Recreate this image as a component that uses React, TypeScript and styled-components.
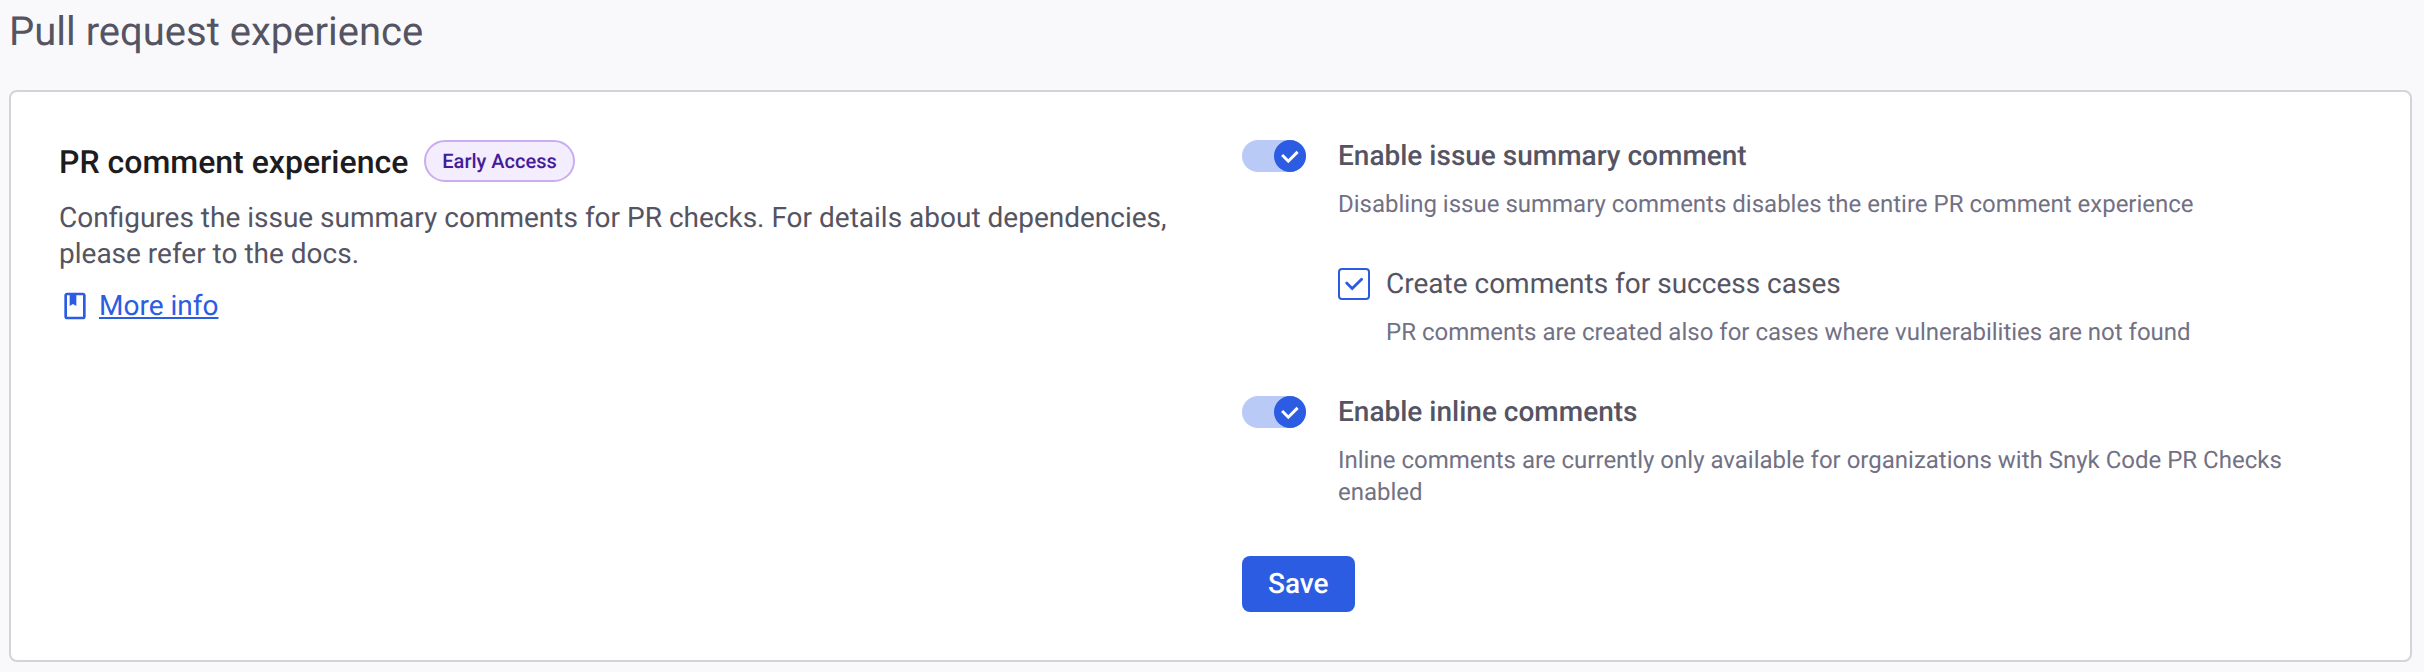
import React from 'react';
import styled, { createGlobalStyle } from 'styled-components';

const Global = createGlobalStyle`
  *, *::before, *::after { box-sizing: border-box; }
  body {
    margin: 0;
    background: #f9f9fb;
    font-family: Roboto, "Liberation Sans", sans-serif;
    color: #555463;
    text-rendering: geometricPrecision;
    -webkit-font-smoothing: antialiased;
  }
  h1, h2, p { margin: 0; }
`;

const Page = styled.main`
  min-height: 672px;
  padding: 0 12px 10px 9px;
`;

const PageTitle = styled.h1`
  height: 90px;
  padding-top: 8px;
  font-size: 40px;
  font-weight: 400;
  line-height: 48px;
`;

const Card = styled.section`
  display: grid;
  grid-template-columns: 1183px 1fr;
  height: 572px;
  padding: 48px 48px;
  background: #fff;
  border: 2px solid #d3d3d9;
  border-radius: 8px;
`;

const Summary = styled.div`
  width: 1130px;
`;

const Heading = styled.div`
  display: flex;
  align-items: center;
  gap: 16px;
  height: 42px;
`;

const CardTitle = styled.h2`
  padding-top: 2px;
  font-size: 32px;
  font-weight: 500;
  line-height: 42px;
  color: #1c1c21;
`;

const Badge = styled.span`
  height: 42px;
  padding: 0 16px;
  border: 2px solid #c9aeef;
  border-radius: 21px;
  background: #f4edfe;
  color: #441c99;
  font-size: 20px;
  font-weight: 500;
  line-height: 38px;
`;

const Description = styled.p`
  margin-top: 18px;
  font-size: 28px;
  line-height: 36px;
`;

const DocsLink = styled.a`
  display: flex;
  align-items: center;
  gap: 8px;
  margin-top: 16px;
  color: #2b5ce2;
  font-size: 28px;
  line-height: 36px;
  text-decoration: none;

  span {
    text-decoration: underline;
  }
`;

const Settings = styled.div`
  display: flex;
  flex-direction: column;
  align-items: flex-start;
`;

const Setting = styled.div`
  display: flex;
  gap: 32px;
  height: 128px;
`;

const SubSetting = styled(Setting)`
  gap: 16px;
  padding-left: 96px;
`;

const Track = styled.span`
  display: flex;
  justify-content: flex-end;
  flex: none;
  width: 64px;
  height: 32px;
  border-radius: 16px;
  background: #b9caf7;
`;

const Knob = styled.span`
  display: grid;
  place-items: center;
  width: 32px;
  height: 32px;
  border-radius: 50%;
  background: #2b5ce2;
  color: #fff;
`;

const Checkbox = styled.span`
  display: grid;
  place-items: center;
  flex: none;
  width: 32px;
  height: 32px;
  border: 2px solid #2b5ce2;
  border-radius: 4px;
  color: #2b5ce2;
`;

const Label = styled.p<{ $strong?: boolean }>`
  font-size: 28px;
  font-weight: ${(p) => (p.$strong ? 500 : 400)};
  line-height: 32px;
`;

const Hint = styled.p`
  width: 960px;
  margin-top: 16px;
  font-size: 24px;
  line-height: 32px;
  color: #727184;
`;

const SaveButton = styled.button`
  height: 56px;
  margin-top: 32px;
  padding: 0 26px;
  border: 0;
  border-radius: 8px;
  background: #2b5ce2;
  color: #fff;
  font: 500 28px/56px Roboto, "Liberation Sans", sans-serif;
  text-rendering: inherit;
`;

const KnobCheck = () => (
  <svg width="32" height="32" viewBox="0 0 32 32" fill="none" stroke="currentColor" strokeWidth="3">
    <path d="M8.100 15L14.300 21.200L23.600 11.900" />
  </svg>
);

const BoxCheck = () => (
  <svg width="28" height="28" viewBox="2 2 28 28" fill="none" stroke="currentColor" strokeWidth="2.8" strokeLinecap="round">
    <path d="M8.700 15.100L14.200 20.600L23.600 11.200" />
  </svg>
);

const BookIcon = () => (
  <svg width="32" height="32" viewBox="0 0 24 24" fill="currentColor">
    <path d="M18 2H6c-1.100 0-2 .9-2 2v16c0 1.100.9 2 2 2h12c1.100 0 2-.9 2-2V4c0-1.100-.9-2-2-2zm0 18H6V4h2v8l2.500-1.500L13 12V4h5v16z" />
  </svg>
);

const Toggle = () => (
  <Track role="switch" aria-checked="true">
    <Knob>
      <KnobCheck />
    </Knob>
  </Track>
);

export default function App() {
  return (
    <>
      <Global />
      <Page>
        <PageTitle>Pull request experience</PageTitle>
        <Card>
          <Summary>
            <Heading>
              <CardTitle>PR comment experience</CardTitle>
              <Badge>Early Access</Badge>
            </Heading>
            <Description>
              Configures the issue summary comments for PR checks. For details about dependencies, please refer to the
              docs.
            </Description>
            <DocsLink>
              <BookIcon />
              <span>More info</span>
            </DocsLink>
          </Summary>
          <Settings>
            <Setting>
              <Toggle />
              <div>
                <Label $strong>Enable issue summary comment</Label>
                <Hint>Disabling issue summary comments disables the entire PR comment experience</Hint>
              </div>
            </Setting>
            <SubSetting>
              <Checkbox role="checkbox" aria-checked="true">
                <BoxCheck />
              </Checkbox>
              <div>
                <Label>Create comments for success cases</Label>
                <Hint>PR comments are created also for cases where vulnerabilities are not found</Hint>
              </div>
            </SubSetting>
            <Setting>
              <Toggle />
              <div>
                <Label $strong>Enable inline comments</Label>
                <Hint>
                  Inline comments are currently only available for organizations with Snyk Code PR Checks enabled
                </Hint>
              </div>
            </Setting>
            <SaveButton type="button">Save</SaveButton>
          </Settings>
        </Card>
      </Page>
    </>
  );
}
